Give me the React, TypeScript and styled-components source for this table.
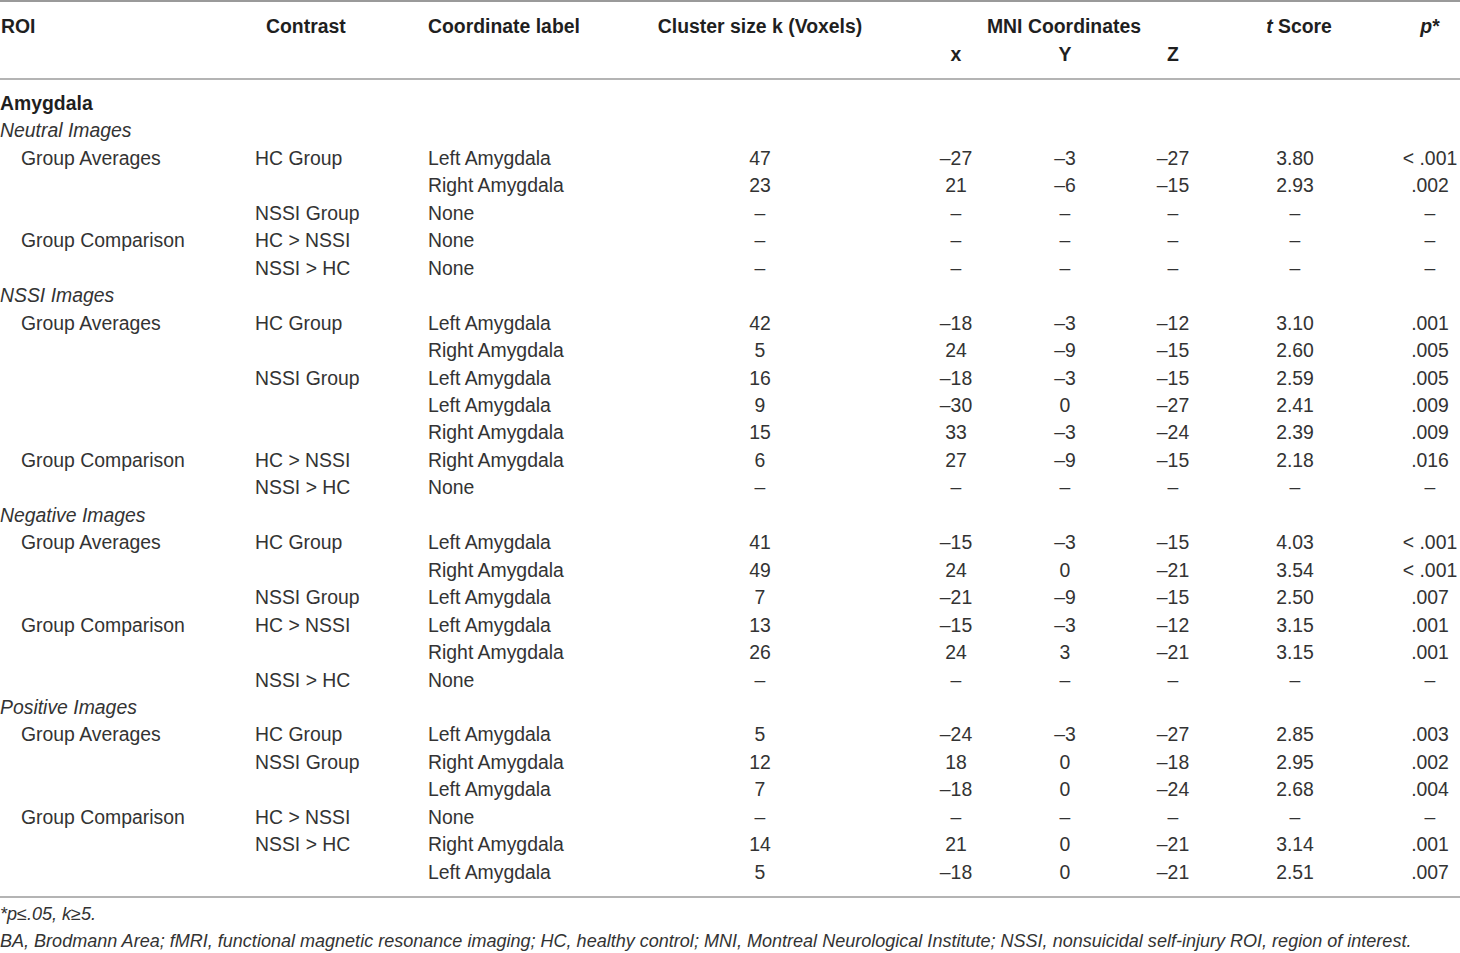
import React from "react";
import styled, { createGlobalStyle } from "styled-components";

const Global = createGlobalStyle`
  html, body { margin: 0; padding: 0; background: #fff; overflow: hidden; }
  body { font-family: "Liberation Sans", Arial, sans-serif; color: #333333; }
`;

const COLS = "255px 173px 212px 240px 152px 66px 150px 94px 118px";

const Page = styled.div`
  width: 1460px;
`;

const Table = styled.div`
  border-top: 2px solid #9a9a9a;
`;

const Head = styled.div`
  padding: 11px 0 10px;
  border-bottom: 2px solid #b4b4b4;
`;

const Body = styled.div`
  padding: 10px 0 10px;
  border-bottom: 2px solid #b4b4b4;
`;

const Row = styled.div`
  display: grid;
  grid-template-columns: ${COLS};
  height: 27.46px;
  line-height: 27.46px;
  font-size: 19.4px;
  white-space: nowrap;
`;

const HeadRow = styled(Row)`
  font-weight: 700;
  color: #1f1f1f;
  height: 27.5px;
  line-height: 27.5px;
`;

const Cell = styled.div<{ $center?: boolean; $span?: number; $padL?: number }>`
  text-align: ${(p) => (p.$center ? "center" : "left")};
  padding-left: ${(p) => p.$padL ?? 0}px;
  ${(p) => (p.$span ? `grid-column: span ${p.$span};` : "")}
`;

const Section = styled.div`
  font-size: 19.4px;
  line-height: 27.46px;
  height: 27.46px;
  font-weight: 700;
  color: #1f1f1f;
`;

const SubSection = styled.div`
  font-size: 19.4px;
  line-height: 27.46px;
  height: 27.46px;
  font-style: italic;
`;

const Em = styled.i`
  font-style: italic;
`;

const Notes = styled.div`
  padding-top: 3px;
  font-size: 18.05px;
  line-height: 27px;
  font-style: italic;
  color: #333333;
`;

type D = [string, string, string, string, string, string, string, string, string];
type Block = { title: string; rows: D[] };

const N = "–";
const none = (roi: string, c: string): D => [roi, c, "None", N, N, N, N, N, N];

const blocks: Block[] = [
  {
    title: "Neutral Images",
    rows: [
      ["Group Averages", "HC Group", "Left Amygdala", "47", "–27", "–3", "–27", "3.80", "< .001"],
      ["", "", "Right Amygdala", "23", "21", "–6", "–15", "2.93", ".002"],
      none("", "NSSI Group"),
      none("Group Comparison", "HC > NSSI"),
      none("", "NSSI > HC"),
    ],
  },
  {
    title: "NSSI Images",
    rows: [
      ["Group Averages", "HC Group", "Left Amygdala", "42", "–18", "–3", "–12", "3.10", ".001"],
      ["", "", "Right Amygdala", "5", "24", "–9", "–15", "2.60", ".005"],
      ["", "NSSI Group", "Left Amygdala", "16", "–18", "–3", "–15", "2.59", ".005"],
      ["", "", "Left Amygdala", "9", "–30", "0", "–27", "2.41", ".009"],
      ["", "", "Right Amygdala", "15", "33", "–3", "–24", "2.39", ".009"],
      ["Group Comparison", "HC > NSSI", "Right Amygdala", "6", "27", "–9", "–15", "2.18", ".016"],
      none("", "NSSI > HC"),
    ],
  },
  {
    title: "Negative Images",
    rows: [
      ["Group Averages", "HC Group", "Left Amygdala", "41", "–15", "–3", "–15", "4.03", "< .001"],
      ["", "", "Right Amygdala", "49", "24", "0", "–21", "3.54", "< .001"],
      ["", "NSSI Group", "Left Amygdala", "7", "–21", "–9", "–15", "2.50", ".007"],
      ["Group Comparison", "HC > NSSI", "Left Amygdala", "13", "–15", "–3", "–12", "3.15", ".001"],
      ["", "", "Right Amygdala", "26", "24", "3", "–21", "3.15", ".001"],
      none("", "NSSI > HC"),
    ],
  },
  {
    title: "Positive Images",
    rows: [
      ["Group Averages", "HC Group", "Left Amygdala", "5", "–24", "–3", "–27", "2.85", ".003"],
      ["", "NSSI Group", "Right Amygdala", "12", "18", "0", "–18", "2.95", ".002"],
      ["", "", "Left Amygdala", "7", "–18", "0", "–24", "2.68", ".004"],
      none("Group Comparison", "HC > NSSI"),
      ["", "NSSI > HC", "Right Amygdala", "14", "21", "0", "–21", "3.14", ".001"],
      ["", "", "Left Amygdala", "5", "–18", "0", "–21", "2.51", ".007"],
    ],
  },
];

const DataRow = ({ d }: { d: D }) => (
  <Row>
    <Cell $padL={21}>{d[0]}</Cell>
    <Cell>{d[1]}</Cell>
    <Cell>{d[2]}</Cell>
    <Cell $center>{d[3]}</Cell>
    <Cell $center>{d[4]}</Cell>
    <Cell $center>{d[5]}</Cell>
    <Cell $center>{d[6]}</Cell>
    <Cell $center>{d[7]}</Cell>
    <Cell $center $padL={58}>{d[8]}</Cell>
  </Row>
);

export default function App() {
  return (
    <Page>
      <Global />
      <Table>
        <Head>
          <HeadRow>
            <Cell $padL={1}>ROI</Cell>
            <Cell $padL={11}>Contrast</Cell>
            <Cell>Coordinate label</Cell>
            <Cell $center>Cluster size k (Voxels)</Cell>
            <Cell $center $span={3}>MNI Coordinates</Cell>
            <Cell $center $padL={8}>
              <Em>t</Em> Score
            </Cell>
            <Cell $center $padL={58}>
              <Em>p</Em>*
            </Cell>
          </HeadRow>
          <HeadRow>
            <Cell />
            <Cell />
            <Cell />
            <Cell />
            <Cell $center>x</Cell>
            <Cell $center>Y</Cell>
            <Cell $center>Z</Cell>
            <Cell />
            <Cell />
          </HeadRow>
        </Head>
        <Body>
          <Section>Amygdala</Section>
          {blocks.map((b) => (
            <React.Fragment key={b.title}>
              <SubSection>{b.title}</SubSection>
              {b.rows.map((r, i) => (
                <DataRow key={i} d={r} />
              ))}
            </React.Fragment>
          ))}
        </Body>
      </Table>
      <Notes>
        <div>*p≤.05, k≥5.</div>
        <div>
          BA, Brodmann Area; fMRI, functional magnetic resonance imaging; HC, healthy control; MNI, Montreal
          Neurological Institute; NSSI, nonsuicidal self-injury ROI, region of interest.
        </div>
      </Notes>
    </Page>
  );
}
